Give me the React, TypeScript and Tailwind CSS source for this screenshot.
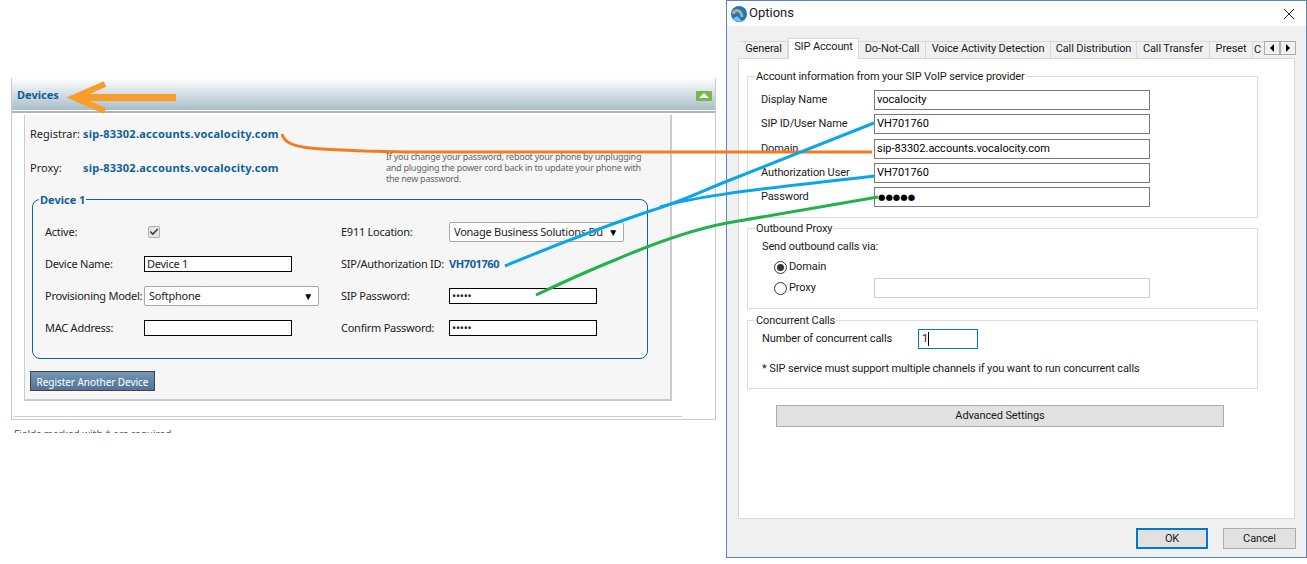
import { Check } from "lucide-react";

const tabs = [
  { label: "General", className: "w-[48px]" },
  { label: "SIP Account", className: "w-[71px]", active: true },
  { label: "Do-Not-Call", className: "w-[67px]" },
  { label: "Voice Activity Detection", className: "w-[125px]" },
  { label: "Call Distribution", className: "w-[86px]" },
  { label: "Call Transfer", className: "w-[73px]" },
  { label: "Preset", className: "w-[43px]" },
];

const textBox = "h-[16px] w-[148px] border border-black bg-white px-[2px] text-[11px] leading-[14px] text-[#222]";
const winInput = "h-[20px] w-[276px] border border-[#7a7a7a] bg-white px-[2px] text-[11px] leading-[18px] tracking-[0px] text-black";

function WebSelect({ value, className }: { value: string; className: string }) {
  return (
    <div className={`flex h-[20px] items-center justify-between rounded-[2px] border border-[#a9a9a9] bg-white pl-[4px] pr-[5px] text-[11px] ${className}`}>
      <span className="w-[149px] overflow-hidden whitespace-nowrap text-[#222]">{value}</span>
      <span className="text-[10px] text-black">▼</span>
    </div>
  );
}

function Devices() {
  return (
    <div className="ml-[11px] mt-[78px] w-[705px] font-['Noto_Sans',sans-serif] text-[11px] text-[#222]">
      <div className="h-[342px] border-x border-b border-[#cccccc]">
        {/* Header */}
        <div className="flex h-[32px] items-center justify-between bg-gradient-to-b from-white to-[#a9bec9] pl-[5px] pr-[3px]">
          <span className="mt-[2px] text-[11px] font-bold text-[#0f5f9c]">Devices</span>
          <div className="mt-[3px] flex h-[10px] w-[16px] items-center justify-center bg-[#7ab648]">
            <div className="h-0 w-0 border-x-[5px] border-b-[5px] border-x-transparent border-b-white" />
          </div>
        </div>
        <div className="mt-[1px] h-[2px] bg-[#a9b6c2]" />

        {/* Registrar box */}
        <div className="ml-[12px] mt-[2px] h-[286px] w-[648px] border-b-2 border-l border-r-2 border-[#cccccc] bg-[#f6f6f6]">
          <div className="flex h-[76px]">
            <div className="ml-[5px] w-[356px] pt-[11px]">
              <div className="flex h-[16px] items-center">
                <span className="w-[53px]">Registrar:</span>
                <span className="font-bold tracking-[0.24px] text-[#0f6099]">sip-83302.accounts.vocalocity.com</span>
              </div>
              <div className="mt-[18px] flex h-[16px] items-center">
                <span className="w-[53px]">Proxy:</span>
                <span className="font-bold tracking-[0.24px] text-[#0f6099]">sip-83302.accounts.vocalocity.com</span>
              </div>
            </div>
            <p className="mt-[36px] whitespace-nowrap text-[9px] leading-[11px] tracking-[-0.25px] text-[#666]">
              If you change your password, reboot your phone by unplugging
              <br />
              and plugging the power cord back in to update your phone with
              <br />
              the new password.
            </p>
          </div>

          <fieldset className="ml-[7px] h-[168px] w-[616px] rounded-[8px] border border-[#0a64a0] px-[12px] pt-[9px] tracking-[-0.25px]">
            <legend className="ml-[-6px] px-[1px] text-[11px] font-bold leading-[16px] tracking-[0px] text-[#0f6099]">
              <span className="relative top-[1px]">Device 1</span>
            </legend>
            <div className="grid grid-cols-[296px_1fr] auto-rows-[32px] items-center">
              <div className="flex items-center">
                <span className="w-[99px]">Active:</span>
                <div className="ml-[4px] flex h-[12px] w-[12px] items-center justify-center rounded-[2px] border border-[#b0b0b0] bg-[#e4e4e4]">
                  <Check className="h-[10px] w-[10px] text-[#444]" strokeWidth={4} />
                </div>
              </div>
              <div className="flex items-center">
                <span className="w-[108px]">E911 Location:</span>
                <WebSelect value="Vonage Business Solutions Du" className="w-[175px]" />
              </div>

              <div className="flex items-center">
                <span className="w-[99px]">Device Name:</span>
                <div className={textBox}>Device 1</div>
              </div>
              <div className="flex items-center">
                <span className="w-[108px] whitespace-nowrap">SIP/Authorization ID:</span>
                <span className="font-bold tracking-[-0.4px] text-[#0f6099]">VH701760</span>
              </div>

              <div className="flex items-center">
                <span className="w-[99px] whitespace-nowrap">Provisioning Model:</span>
                <WebSelect value="Softphone" className="w-[175px]" />
              </div>
              <div className="flex items-center">
                <span className="w-[108px]">SIP Password:</span>
                <div className={textBox}>•••••</div>
              </div>

              <div className="flex items-center">
                <span className="w-[99px]">MAC Address:</span>
                <div className={textBox} />
              </div>
              <div className="flex items-center">
                <span className="w-[108px]">Confirm Password:</span>
                <div className={textBox}>•••••</div>
              </div>
            </div>
          </fieldset>

          <button className="ml-[5px] mt-[12px] h-[20px] w-[125px] border border-[#444] bg-gradient-to-b from-[#7396b5] to-[#4f7496] pt-[2px] text-[10px] tracking-[-0.05px] text-white">
            Register Another Device
          </button>
        </div>

        <div className="ml-[2px] mt-[15px] h-px w-[668px] bg-[#cccccc]" />
      </div>

      {/* Footer note, cut off by the crop of the picture */}
      <div className="ml-[3px] mt-[9px] h-[4px] overflow-hidden text-[10px] leading-[10px] text-[#555]">
        Fields marked with <span className="text-[#e8452c]">*</span> are required
      </div>
    </div>
  );
}

function Group({ title, className, children }: { title: string; className: string; children: React.ReactNode }) {
  return (
    <fieldset className={`ml-[8px] w-[511px] border border-[#dcdcdc] ${className}`}>
      <legend className="ml-[7px] px-[1px] leading-[16px]">
        <span className="relative top-[1px]">{title}</span>
      </legend>
      {children}
    </fieldset>
  );
}

function AccountRow({ label, value, className }: { label: string; value: string; className: string }) {
  return (
    <div className={`ml-[13px] flex h-[20px] items-center ${className}`}>
      <span className="w-[113px] pt-[1px]">{label}</span>
      <div className={winInput}>{value}</div>
    </div>
  );
}

function OptionsWindow() {
  return (
    <div className="ml-[10px] flex h-[558px] w-[581px] flex-col border border-[#5b86b8] bg-[#f0f0f0] font-['Roboto',sans-serif] text-[11px] tracking-[-0.12px] text-[#1a1a1a]">
      {/* Title bar */}
      <div className="flex h-[25px] items-center justify-between bg-white pl-[3px] pr-[11px]">
        <div className="flex items-center gap-[1px]">
          <svg viewBox="0 0 18 18" className="h-[18px] w-[18px]">
            <circle cx="9" cy="9" r="8" fill="#1678c2" />
            <path d="M3 14 C5 16 9 17 12 16 L7 11 Z" fill="#7fc4ef" />
            <path d="M3 9 C5 4 11 4 12 12" stroke="#c9a878" strokeWidth="3" fill="none" />
          </svg>
          <span className="pb-[1px] text-[13px] tracking-[0px]">Options</span>
        </div>
        <svg viewBox="0 0 12 12" className="h-[12px] w-[12px]">
          <path d="M1 1 L11 11 M11 1 L1 11" stroke="#222" strokeWidth="1" fill="none" />
        </svg>
      </div>

      {/* Tabs */}
      <div className="ml-[13px] mt-[12px] flex h-[20px] items-end">
        {tabs.map((tab) => (
          <div
            key={tab.label}
            className={
              tab.active
                ? `relative z-10 -mb-px flex h-[21px] items-center justify-center border-x border-t border-[#d9d9d9] bg-white pb-[3px] ${tab.className}`
                : `flex h-[17px] items-center justify-center border-r border-t border-[#d9d9d9] bg-[#f0f0f0] pb-[1px] ${tab.className}`
            }
          >
            {tab.label}
          </div>
        ))}
        <div className="h-[17px] w-[11px] overflow-hidden border-t border-[#d9d9d9] pl-[1px] leading-[15px]">C</div>
        <div className="mb-[3px] flex h-[14px] self-end">
          <div className="flex h-[14px] w-[16px] items-center justify-center border border-[#adadad] bg-[#f0f0f0]">
            <div className="h-0 w-0 border-y-[4px] border-r-[4px] border-y-transparent border-r-black" />
          </div>
          <div className="flex h-[14px] w-[16px] items-center justify-center border border-[#adadad] bg-[#f0f0f0]">
            <div className="h-0 w-0 border-y-[4px] border-l-[4px] border-y-transparent border-l-black" />
          </div>
        </div>
      </div>

      {/* Tab page */}
      <div className="ml-[11px] h-[461px] w-[557px] border border-[#d9d9d9] bg-white">
        <Group title="Account information from your SIP VoIP service provider" className="mt-[9px] h-[150px] pt-[6px]">
          <AccountRow label="Display Name" value="vocalocity" className="" />
          <AccountRow label="SIP ID/User Name" value="VH701760" className="mt-[4px]" />
          <AccountRow label="Domain" value="sip-83302.accounts.vocalocity.com" className="mt-[5px]" />
          <AccountRow label="Authorization User" value="VH701760" className="mt-[4px]" />
          <div className="ml-[13px] mt-[4px] flex h-[20px] items-center">
            <span className="w-[113px] pt-[1px]">Password</span>
            <div className="h-[20px] w-[276px] border border-[#7a7a7a] bg-white pl-[3px] font-['DejaVu_Sans',sans-serif] text-[8.5px] leading-[18px] tracking-[0px] text-black">●●●●●</div>
          </div>
        </Group>

        <Group title="Outbound Proxy" className="mt-[2px] h-[89px] pt-[2px]">
          <div className="ml-[14px] pt-[1px] leading-[15px]">Send outbound calls via:</div>
          <div className="ml-[26px] mt-[5px] flex h-[16px] items-center gap-[2px]">
            <div className="flex h-[13px] w-[13px] items-center justify-center rounded-full border border-[#333] bg-white">
              <div className="h-[7px] w-[7px] rounded-full bg-[#333]" />
            </div>
            <span className="pt-[1px]">Domain</span>
          </div>
          <div className="ml-[26px] mt-[3px] flex h-[20px] items-center">
            <div className="flex w-[100px] items-center gap-[2px]">
              <div className="h-[13px] w-[13px] rounded-full border border-[#333] bg-white" />
              <span className="pt-[1px]">Proxy</span>
            </div>
            <div className="h-[20px] w-[276px] border border-[#cccccc] bg-white" />
          </div>
        </Group>

        <Group title="Concurrent Calls" className="mt-[3px] h-[77px] pt-[1px]">
          <div className="ml-[14px] flex h-[20px] items-center">
            <span className="w-[156px] pt-[1px]">Number of concurrent calls</span>
            <div className="flex h-[20px] w-[60px] items-center border border-[#0078d7] bg-white px-[3px]">
              1<span className="h-[14px] w-px bg-black" />
            </div>
          </div>
          <div className="ml-[14px] mt-[11px] pt-[1px] leading-[15px]">* SIP service must support multiple channels if you want to run concurrent calls</div>
        </Group>

        <button className="ml-[37px] mt-[16px] h-[22px] w-[448px] border border-[#adadad] bg-[#e1e1e1] pt-[1px] text-center">
          Advanced Settings
        </button>
      </div>

      {/* Dialog buttons */}
      <div className="mr-[10px] mt-[9px] flex justify-end gap-[15px]">
        <button className="h-[21px] w-[72px] border-2 border-[#0078d7] bg-[#e1e1e1] pt-[1px]">OK</button>
        <button className="h-[21px] w-[73px] border border-[#adadad] bg-[#e1e1e1] pt-[1px]">Cancel</button>
      </div>
    </div>
  );
}

export default function App() {
  return (
    <div className="relative flex h-[564px] w-[1307px] items-start overflow-hidden bg-white">
      <Devices />
      <OptionsWindow />

      {/* Hand drawn annotations on top of the screenshots */}
      <svg viewBox="0 0 1307 564" className="pointer-events-none absolute inset-0 z-20 h-[564px] w-[1307px]" fill="none">
        <path d="M176 97.5 L76 97.5" stroke="#f99d2a" strokeWidth="7" />
        <path d="M105 84 L74 97.5 L105 111" stroke="#f99d2a" strokeWidth="6" />
        <path d="M282 134 C284 142 292 146 310 148 C330 150 345 150 365 151 L405 152 L872 152" stroke="#f47b20" strokeWidth="3" />
        <path d="M505 266 C560 243 600 228 647 212 C680 202 700 192 725 182 L874 123" stroke="#0aa5ea" strokeWidth="3" />
        <path d="M660 207 C690 198 730 192 875 176" stroke="#0aa5ea" strokeWidth="3" />
        <path d="M536 295 C570 279 590 270 615 260 C650 245 690 230 727 223 L878 197" stroke="#22b14c" strokeWidth="3" />
      </svg>
    </div>
  );
}
